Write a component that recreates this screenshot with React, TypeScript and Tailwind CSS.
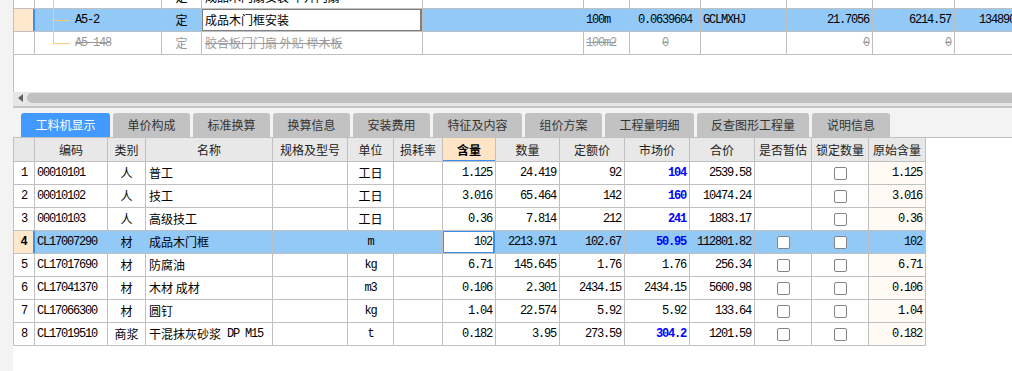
import { ReactNode } from 'react';
import clsx from 'clsx';

const CJK = "font-['Noto_Sans_CJK_SC',sans-serif]";
const MONO = "font-['Liberation_Mono','Noto_Sans_CJK_SC',monospace] tracking-[-1.2px]";
const LINE = 'border-r border-[#c0c0c0]';

type Align = 'l' | 'c' | 'r';

const alignCls: Record<Align, string> = {
  l: 'justify-start pl-[2px]',
  c: 'justify-center',
  r: 'justify-end pr-[3px]',
};

interface CellProps {
  w: string;
  align?: Align;
  border?: string;
  className?: string;
  children?: ReactNode;
}

function Cell({ w, align = 'l', border = LINE, className, children }: CellProps) {
  return (
    <div
      className={clsx(
        'relative flex h-full shrink-0 items-center overflow-hidden whitespace-nowrap',
        w,
        border,
        alignCls[align],
        className
      )}
    >
      {children}
    </div>
  );
}

function Check() {
  return <span className="block h-[13px] w-[13px] rounded-[2px] border border-[#858585] bg-white" />;
}

// tree connector in the top grid
function Tree({ kind }: { kind: 'pass' | 'branch' | 'end' }) {
  return (
    <>
      <span
        className={clsx(
          'absolute left-[18px] top-0 w-px bg-[#ffc878]',
          kind === 'end' ? 'h-1/2' : 'h-full'
        )}
      />
      {kind !== 'pass' && <span className="absolute left-[18px] top-1/2 h-px w-[17px] bg-[#ffc878]" />}
    </>
  );
}

const tabs = [
  { label: '工料机显示', w: 'w-[89px]' },
  { label: '单价构成', w: 'w-[77px]' },
  { label: '标准换算', w: 'w-[77px]' },
  { label: '换算信息', w: 'w-[77px]' },
  { label: '安装费用', w: 'w-[77px]' },
  { label: '特征及内容', w: 'w-[89px]' },
  { label: '组价方案', w: 'w-[77px]' },
  { label: '工程量明细', w: 'w-[89px]' },
  { label: '反查图形工程量', w: 'w-[112px]' },
  { label: '说明信息', w: 'w-[78px]' },
];

const cols = [
  { title: '', w: 'w-[21px]' },
  { title: '编码', w: 'w-[73px]' },
  { title: '类别', w: 'w-[38px]' },
  { title: '名称', w: 'w-[127px]' },
  { title: '规格及型号', w: 'w-[75px]' },
  { title: '单位', w: 'w-[46px]' },
  { title: '损耗率', w: 'w-[49px]' },
  { title: '含量', w: 'w-[53px]' },
  { title: '数量', w: 'w-[64px]' },
  { title: '定额价', w: 'w-[65px]' },
  { title: '市场价', w: 'w-[65px]' },
  { title: '合价', w: 'w-[65px]' },
  { title: '是否暂估', w: 'w-[57px]' },
  { title: '锁定数量', w: 'w-[57px]' },
  { title: '原始含量', w: 'w-[57px]' },
];

interface Item {
  code: string;
  kind: string;
  name: string;
  spec?: string;
  unit: string;
  qty: string;
  amount: string;
  quota: string;
  market: string;
  blue: boolean;
  total: string;
  est: boolean;
}

const items: Item[] = [
  { code: '00010101', kind: '人', name: '普工', unit: '工日', qty: '1.125', amount: '24.419', quota: '92', market: '104', blue: true, total: '2539.58', est: false },
  { code: '00010102', kind: '人', name: '技工', unit: '工日', qty: '3.016', amount: '65.464', quota: '142', market: '160', blue: true, total: '10474.24', est: false },
  { code: '00010103', kind: '人', name: '高级技工', unit: '工日', qty: '0.36', amount: '7.814', quota: '212', market: '241', blue: true, total: '1883.17', est: false },
  { code: 'CL17007290', kind: '材', name: '成品木门框', unit: 'm', qty: '102', amount: '2213.971', quota: '102.67', market: '50.95', blue: true, total: '112801.82', est: true },
  { code: 'CL17017690', kind: '材', name: '防腐油', unit: 'kg', qty: '6.71', amount: '145.645', quota: '1.76', market: '1.76', blue: false, total: '256.34', est: true },
  { code: 'CL17041370', kind: '材', name: '木材 成材', unit: 'm3', qty: '0.106', amount: '2.301', quota: '2434.15', market: '2434.15', blue: false, total: '5600.98', est: true },
  { code: 'CL17066300', kind: '材', name: '圆钉', unit: 'kg', qty: '1.04', amount: '22.574', quota: '5.92', market: '5.92', blue: false, total: '133.64', est: true },
  { code: 'CL17019510', kind: '商浆', name: '干混抹灰砂浆', spec: 'DP M15', unit: 't', qty: '0.182', amount: '3.95', quota: '273.59', market: '304.2', blue: true, total: '1201.59', est: true },
];

const SELECTED = 3;

function TopGrid() {
  return (
    <div className="h-[92px] shrink-0 overflow-hidden border-l border-[#c0c0c0] bg-white text-[12px] text-black">
      <div className="-mt-[14px]">
        <div className="flex h-[23px] border-b border-[#c0c0c0]">
          <Cell w="w-[21px]" />
          <Cell w="w-[127px]">
            <Tree kind="pass" />
          </Cell>
          <Cell w="w-[40px]" align="c" className={CJK}>定</Cell>
          <Cell w="w-[221px]" className={clsx(CJK, 'pl-[3px]')}>成品木门扇安装 平开门扇</Cell>
          <Cell w="w-[161px]" />
          <Cell w="w-[46px]" />
          <Cell w="w-[71px]" />
          <Cell w="w-[86px]" />
          <Cell w="w-[86px]" />
          <Cell w="w-[82px]" />
          <Cell w="w-[140px]" />
        </div>

        <div className="flex h-[23px] border-b border-[#c0c0c0] bg-[#92c9f7]">
          <Cell w="w-[21px]" border="border-r-2 border-[#3d8ef0]" className="bg-[#ffe8cc]" />
          <Cell w="w-[127px]" className={clsx(MONO, 'pl-[40px]')}>
            <Tree kind="branch" />
            A5-2
          </Cell>
          <Cell w="w-[40px]" align="c" className={CJK}>定</Cell>
          <Cell w="w-[221px]" className={clsx(CJK, 'bg-white pl-[3px]')}>
            <span className="absolute -bottom-px -left-px -top-px right-0 border-2 border-[#7f7f7f]" />
            成品木门框安装
          </Cell>
          <Cell w="w-[161px]" />
          <Cell w="w-[46px]" className={MONO}>100m</Cell>
          <Cell w="w-[71px]" align="c" className={MONO}>0.0639604</Cell>
          <Cell w="w-[86px]" className={MONO}>GCLMXHJ</Cell>
          <Cell w="w-[86px]" align="r" className={MONO}>21.7056</Cell>
          <Cell w="w-[82px]" align="r" className={MONO}>6214.57</Cell>
          <Cell w="w-[140px]" className={clsx(MONO, 'pl-[24px]')}>134890.56</Cell>
        </div>

        <div className="flex h-[23px] border-b border-[#c0c0c0] text-[#9a9a9a]">
          <Cell w="w-[21px]" />
          <Cell w="w-[127px]" className={clsx(MONO, 'pl-[40px] line-through')}>
            <Tree kind="end" />
            A5-148
          </Cell>
          <Cell w="w-[40px]" align="c" className={CJK}>定</Cell>
          <Cell w="w-[221px]" className={clsx(CJK, 'pl-[3px] line-through')}>胶合板门门扇 外贴 榉木板</Cell>
          <Cell w="w-[161px]" />
          <Cell w="w-[46px]" className={clsx(MONO, 'line-through')}>100m2</Cell>
          <Cell w="w-[71px]" align="c" className={clsx(MONO, 'line-through')}>0</Cell>
          <Cell w="w-[86px]" />
          <Cell w="w-[86px]" align="r" className={clsx(MONO, 'line-through')}>0</Cell>
          <Cell w="w-[82px]" align="r" className={clsx(MONO, 'line-through')}>0</Cell>
          <Cell w="w-[140px]" border="" />
        </div>
      </div>
    </div>
  );
}

function ScrollBar() {
  return (
    <div className="flex h-[16px] shrink-0 items-center border-b-2 border-[#c4c4c4] bg-[#e6e6e6] pb-[2px]">
      <div className="flex w-[14px] shrink-0 items-center justify-center">
        <span className="block h-0 w-0 border-y-[4px] border-r-[5px] border-y-transparent border-r-[#606060]" />
      </div>
      <div className="h-[10px] flex-1 rounded-l-full bg-[#c1c1c1]" />
    </div>
  );
}

function Tabs() {
  return (
    <div className={clsx('flex h-[30px] shrink-0 items-end gap-[3px] border-b border-[#c0c0c0] bg-[#f3f3f3] pl-[8px] text-[12px]', CJK)}>
      {tabs.map((t, i) => (
        <div
          key={t.label}
          className={clsx(
            'flex h-[24px] shrink-0 items-center justify-center rounded-t-[3px]',
            t.w,
            i === 0 ? 'bg-[#4299ff] text-white' : 'bg-[#c2c2c2] text-[#333]'
          )}
        >
          {t.label}
        </div>
      ))}
    </div>
  );
}

function Table() {
  return (
    <div className="w-fit border-l border-[#c0c0c0] text-[12px] text-black">
      <div className={clsx('flex h-[24px] border-b border-[#c0c0c0] bg-[#e8e8e8] text-[#222]', CJK)}>
        {cols.map((c, i) =>
          i === 7 ? (
            <Cell key={i} w={c.w} align="c" className="bg-[#ffe5c6] font-bold text-black">
              {c.title}
              <span className="absolute -bottom-px left-0 right-0 h-[2px] bg-[#3d8ef0]" />
            </Cell>
          ) : (
            <Cell key={i} w={c.w} align="c">
              {c.title}
            </Cell>
          )
        )}
      </div>

      {items.map((r, i) => {
        const sel = i === SELECTED;
        return (
          <div key={r.code} className={clsx('flex h-[23px] border-b border-[#c0c0c0]', sel && 'bg-[#92c9f7]')}>
            <Cell
              w="w-[21px]"
              align="c"
              border={sel ? 'border-r-2 border-[#3d8ef0]' : LINE}
              className={clsx(MONO, sel && 'bg-[#ffe8cc] font-bold')}
            >
              {i + 1}
            </Cell>
            <Cell w="w-[73px]" className={MONO}>{r.code}</Cell>
            <Cell w="w-[38px]" align="c" className={CJK}>{r.kind}</Cell>
            <Cell w="w-[127px]" className={clsx(CJK, 'pl-[3px]')}>
              {r.name}
              {r.spec && <span className={clsx(MONO, 'ml-[6px]')}>{r.spec}</span>}
            </Cell>
            <Cell w="w-[75px]" />
            <Cell w="w-[46px]" align="c" className={r.unit === '工日' ? CJK : MONO}>{r.unit}</Cell>
            <Cell w="w-[49px]" />
            <Cell w="w-[53px]" align="r" className={clsx(MONO, sel && 'bg-white')}>
              {sel && <span className="absolute -bottom-px -left-px -top-px right-0 border-2 border-[#3d8ef0]" />}
              {r.qty}
            </Cell>
            <Cell w="w-[64px]" align="r" className={MONO}>{r.amount}</Cell>
            <Cell w="w-[65px]" align="r" className={MONO}>{r.quota}</Cell>
            <Cell w="w-[65px]" align="r" className={clsx(MONO, r.blue && 'font-bold text-[#0000ff]')}>
              {r.market}
            </Cell>
            <Cell w="w-[65px]" align="r" className={MONO}>{r.total}</Cell>
            <Cell w="w-[57px]" align="c">{r.est && <Check />}</Cell>
            <Cell w="w-[57px]" align="c"><Check /></Cell>
            <Cell w="w-[57px]" align="r" className={clsx(MONO, !sel && 'bg-[#fffaf4]')}>{r.qty}</Cell>
          </div>
        );
      })}
    </div>
  );
}

export default function App() {
  return (
    <div className="flex h-[371px] w-[1012px] overflow-hidden bg-white">
      <div className="w-[13px] shrink-0 bg-[#f3f3f3]" />
      <div className="flex min-w-0 flex-1 flex-col">
        <TopGrid />
        <ScrollBar />
        <Tabs />
        <Table />
      </div>
    </div>
  );
}
